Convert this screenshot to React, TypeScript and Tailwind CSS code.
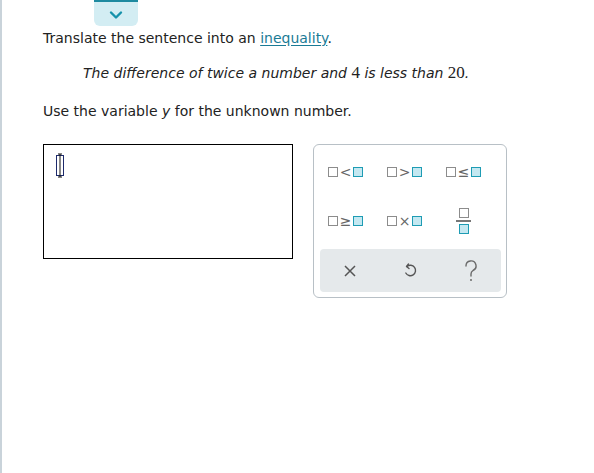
import React from "react";

function Box({ filled }: { filled?: boolean }) {
  return (
    <span
      className={
        filled
          ? "inline-block w-[10px] h-[10px] border-[1.5px] border-[#1e9cb4] bg-[#c4e8f1]"
          : "inline-block w-[10px] h-[10px] border-[1.5px] border-[#8c8c8c] bg-white"
      }
    />
  );
}

function Op({ sym }: { sym: string }) {
  return (
    <button className="h-[40px] flex items-center justify-center gap-[1px]">
      <Box />
      <span className="text-[14px] leading-none text-[#666] font-['DejaVu_Sans'] px-[1px]">{sym}</span>
      <Box filled />
    </button>
  );
}

export default function App() {
  return (
    <div className="w-[594px] h-[473px] bg-white flex font-['DejaVu_Sans',sans-serif] text-[#222]">
      <div className="w-[2px] h-full bg-[#c9d3da]" />
      <div className="flex-1 relative">
        {/* tab */}
        <div className="absolute left-[92px] top-0 w-[44px] h-[26px] bg-[#d3edf3] border-t-2 border-[#1e8aa0] rounded-b-[6px] flex items-center justify-center">
          <svg width="14" height="10" viewBox="0 0 14 10" className="mt-[1px]">
            <path d="M2 2.5 L7 7.5 L12 2.5" stroke="#1592ab" strokeWidth="2.4" fill="none" strokeLinecap="round" strokeLinejoin="round" />
          </svg>
        </div>

        <div className="pl-[41px] pt-[29px]">
          <p className="text-[14px] leading-[18px]">
            Translate the sentence into an{" "}
            <span className="text-[#1a7b96] underline underline-offset-2">inequality</span>.
          </p>
          <p className="mt-[16px] pl-[40px] text-[14px] leading-[20px] italic">
            The difference of twice a number and{" "}
            <span className="not-italic font-['Liberation_Serif'] text-[17px]">4</span> is less than{" "}
            <span className="not-italic font-['Liberation_Serif'] text-[17px]">20</span>.
          </p>
          <p className="mt-[19px] text-[14px] leading-[18px]">
            Use the variable <span className="italic">y</span> for the unknown number.
          </p>

          <div className="mt-[24px] flex items-start gap-[20px]">
            <div className="w-[250px] h-[115px] border border-black pl-[10px] pt-[8px]">
              <svg width="12" height="26" viewBox="0 0 12 26">
                <rect x="2.5" y="2.5" width="7" height="20" fill="none" stroke="#1d2a6b" strokeWidth="1" />
                <path d="M6 1 V24 M4 1 H8 M4 24 H8" stroke="#111" strokeWidth="1" fill="none" />
              </svg>
            </div>

            <div className="w-[194px] h-[154px] border border-[#b8c0c6] rounded-[6px] pl-[2px] pr-[5px] pt-[7px] pb-[5px] flex flex-col">
              <div className="grid grid-cols-3 gap-y-[9px] w-[177px]">
                <Op sym="<" />
                <Op sym=">" />
                <Op sym="≤" />
                <Op sym="≥" />
                <Op sym="×" />
                <button className="h-[40px] flex flex-col items-center justify-center gap-[2px]">
                  <Box />
                  <span className="w-[15px] h-[1.5px] bg-[#777]" />
                  <Box filled />
                </button>
              </div>
              <div className="mt-auto ml-[4px] h-[43px] bg-[#e5e9eb] rounded-[4px] grid grid-cols-3 items-center">
                <div className="flex justify-center">
                  <svg width="14" height="14" viewBox="0 0 14 14">
                    <path d="M2 2 L12 12 M12 2 L2 12" stroke="#555" strokeWidth="1.5" />
                  </svg>
                </div>
                <div className="flex justify-center">
                  <svg width="14" height="17" viewBox="0 0 14 17">
                    <path d="M5.5 2 L3.5 4.5 L6 6.5" stroke="#555" strokeWidth="1.4" fill="none" strokeLinecap="round" strokeLinejoin="round" />
                    <path d="M4 4.5 A5.2 5.2 0 1 1 2.8 11" stroke="#555" strokeWidth="1.4" fill="none" strokeLinecap="round" />
                  </svg>
                </div>
                <div className="flex justify-center">
                  <svg width="14" height="22" viewBox="0 0 14 22">
                    <path d="M2 6 A5 5 0 1 1 9 10.5 C7.5 11.5 7 12.5 7 14 V16" stroke="#6b6b6b" strokeWidth="1.4" fill="none" strokeLinecap="round" />
                    <circle cx="7" cy="20" r="1" fill="#6b6b6b" />
                  </svg>
                </div>
              </div>
            </div>
          </div>
        </div>
      </div>
    </div>
  );
}
